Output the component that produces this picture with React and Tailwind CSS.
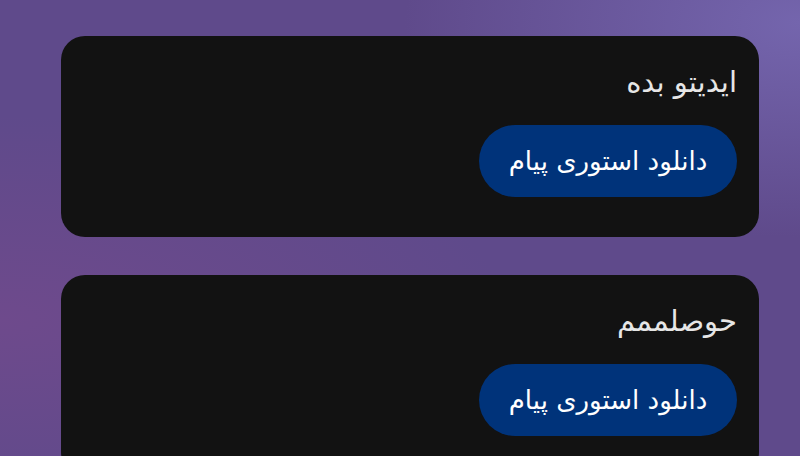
const stories = [
  { id: 1, caption: "ایدیتو بده" },
  { id: 2, caption: "حوصلممم" },
];

const App = () => {
  return (
    // page
    <div
      dir="rtl"
      className="h-[456px] w-[800px] overflow-hidden bg-[#5f4a8b] bg-[radial-gradient(ellipse_at_100%_5%,#7465ad_0%,rgba(116,101,173,0)_35%),radial-gradient(ellipse_at_0%_70%,#6e4a8c_0%,rgba(110,74,140,0)_45%)] font-['DejaVu_Sans',sans-serif]"
    >
      {/* list */}
      <div className="flex flex-col gap-[38px] pt-[36px] pr-[41px] pl-[61px]">
        {stories.map((story) => (
          <div
            key={story.id}
            className="flex flex-col items-start rounded-[24px] bg-[#121212] px-[22px] pt-[28px] pb-[40px]"
          >
            <p className="text-[29px] leading-[36px] text-[#e6e6e6]">
              {story.caption}
            </p>
            <button className="mt-[25px] flex h-[72px] w-[258px] items-center justify-center rounded-full bg-[#00337a] text-[26px] text-white">
              دانلود استوری پیام
            </button>
          </div>
        ))}
      </div>
    </div>
  );
};

export default App;
